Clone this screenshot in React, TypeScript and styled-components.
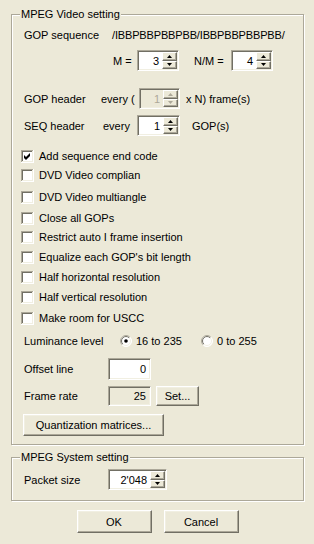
import styled, { createGlobalStyle } from "styled-components"

const GlobalStyle = createGlobalStyle`
  html, body {
    margin: 0;
    padding: 0;
    background: #ece9d8;
  }
  body {
    font-family: "Liberation Sans", Arial, sans-serif;
    font-size: 11px;
    color: #000;
  }
`

const Dialog = styled.div`
  width: 314px;
  height: 544px;
  box-sizing: border-box;
  padding: 8px 10px 0 11px;
  background: #ece9d8;
`

const Group = styled.fieldset<{ $mt?: number }>`
  margin: ${p => p.$mt ?? 0}px 0 0 0;
  padding: 0;
  min-width: 0;
  border: 1px solid #aca899;
  box-shadow: inset 1px 1px 0 #fff, 1px 1px 0 #fff;
`

const Legend = styled.legend`
  margin-left: 8px;
  padding: 0 1px;
  line-height: 13px;
  background: #ece9d8;
`

const Body = styled.div<{ $pt: number; $pb: number }>`
  padding: ${p => p.$pt}px 0 ${p => p.$pb}px 12px;
`

const Row = styled.div<{ $h: number; $mt?: number; $pl?: number }>`
  display: flex;
  align-items: center;
  height: ${p => p.$h}px;
  margin-top: ${p => p.$mt ?? 0}px;
  padding-left: ${p => p.$pl ?? 0}px;
  white-space: nowrap;
`

const Label = styled.span<{ $w?: number; $ml?: number }>`
  flex: none;
  width: ${p => (p.$w ? `${p.$w}px` : "auto")};
  margin-left: ${p => p.$ml ?? 0}px;
`

const Pattern = styled.span`
  flex: none;
  white-space: nowrap;
  letter-spacing: -0.15px;
`

const Field = styled.div<{ $w: number; $h?: number; $bg?: string }>`
  box-sizing: border-box;
  flex: none;
  display: flex;
  width: ${p => p.$w}px;
  height: ${p => p.$h ?? 21}px;
  padding: 1px;
  background: ${p => p.$bg ?? "#fff"};
  border: 1px solid;
  border-color: #aca899 #fff #fff #aca899;
  box-shadow: inset 1px 1px 0 #716f64, inset -1px -1px 0 #f1efe2;
`

const Value = styled.span<{ $dim?: boolean }>`
  flex: 1;
  display: flex;
  align-items: center;
  justify-content: flex-end;
  padding-right: 3px;
  color: ${p => (p.$dim ? "#aca899" : "#000")};
`

const Arrows = styled.div`
  display: flex;
  flex-direction: column;
  width: 15px;
`

const ArrowBtn = styled.div`
  flex: 1;
  box-sizing: border-box;
  display: flex;
  align-items: center;
  justify-content: center;
  background: #ece9d8;
  border: 1px solid;
  border-color: #fff #716f64 #716f64 #fff;
  box-shadow: inset -1px -1px 0 #aca899;
`

const Button = styled.button<{ $w: number; $h: number; $ml?: number }>`
  flex: none;
  box-sizing: border-box;
  width: ${p => p.$w}px;
  height: ${p => p.$h}px;
  margin-left: ${p => p.$ml ?? 0}px;
  padding: 0;
  background: #ece9d8;
  font-family: inherit;
  font-size: 11px;
  color: #000;
  border: 1px solid;
  border-color: #fff #716f64 #716f64 #fff;
  box-shadow: inset -1px -1px 0 #aca899, inset 1px 1px 0 #f1efe2;
`

const CheckRow = styled(Row)`
  margin-left: -3px;
  gap: 5px;
`

const Option = styled.label<{ $w?: number }>`
  display: flex;
  align-items: center;
  gap: 4px;
  width: ${p => (p.$w ? `${p.$w}px` : "auto")};
`

const Footer = styled.div`
  display: flex;
  justify-content: center;
  gap: 12px;
  margin-top: 9px;
`

function Arrow({ up, dim }: { up?: boolean; dim?: boolean }) {
  return (
    <svg width="5" height="3" viewBox="0 0 5 3">
      <path d={up ? "M0 3 L2.5 0 L5 3 Z" : "M0 0 L5 0 L2.5 3 Z"} fill={dim ? "#aca899" : "#000"} />
    </svg>
  )
}

function Spin({ w, value, dim }: { w: number; value: string; dim?: boolean }) {
  return (
    <Field $w={w} $bg={dim ? "#ece9d8" : "#fff"}>
      <Value $dim={dim}>{value}</Value>
      <Arrows>
        <ArrowBtn>
          <Arrow up dim={dim} />
        </ArrowBtn>
        <ArrowBtn>
          <Arrow dim={dim} />
        </ArrowBtn>
      </Arrows>
    </Field>
  )
}

function Check({ checked }: { checked?: boolean }) {
  return (
    <svg width="13" height="13" viewBox="0 0 13 13" style={{ flex: "none" }}>
      <rect x="0" y="0" width="13" height="13" fill="#fff" />
      <rect x="0" y="0" width="12" height="1" fill="#aca899" />
      <rect x="0" y="0" width="1" height="12" fill="#aca899" />
      <rect x="1" y="1" width="10" height="1" fill="#716f64" />
      <rect x="1" y="1" width="1" height="10" fill="#716f64" />
      <rect x="1" y="11" width="11" height="1" fill="#f1efe2" />
      <rect x="11" y="1" width="1" height="11" fill="#f1efe2" />
      {checked && <path d="M3 5 L5 7 L9 3 L9 6 L5 10 L3 8 Z" fill="#000" />}
    </svg>
  )
}

function Radio({ checked }: { checked?: boolean }) {
  return (
    <svg width="12" height="12" viewBox="0 0 12 12" style={{ flex: "none" }}>
      <defs>
        <linearGradient id="rimOuter" x1="0" y1="0" x2="1" y2="1">
          <stop offset="0.45" stopColor="#aca899" />
          <stop offset="0.55" stopColor="#fff" />
        </linearGradient>
        <linearGradient id="rimInner" x1="0" y1="0" x2="1" y2="1">
          <stop offset="0.45" stopColor="#716f64" />
          <stop offset="0.55" stopColor="#f1efe2" />
        </linearGradient>
      </defs>
      <circle cx="6" cy="6" r="5.5" fill="#fff" stroke="url(#rimOuter)" />
      <circle cx="6" cy="6" r="4.5" fill="none" stroke="url(#rimInner)" />
      {checked && <circle cx="6" cy="6" r="1.8" fill="#000" />}
    </svg>
  )
}

const options: [string, boolean, number][] = [
  ["Add sequence end code", true, 12],
  ["DVD Video complian", false, 3],
  ["DVD Video multiangle", false, 6],
  ["Close all GOPs", false, 5],
  ["Restrict auto I frame insertion", false, 3],
  ["Equalize each GOP's bit length", false, 4],
  ["Half horizontal resolution", false, 4],
  ["Half vertical resolution", false, 4],
  ["Make room for USCC", false, 5],
]

export default function App() {
  return (
    <Dialog>
      <GlobalStyle />
      <Group>
        <Legend>MPEG Video setting</Legend>
        <Body $pt={7} $pb={8}>
          <Row $h={14}>
            <Label $w={88}>GOP sequence</Label>
            <Pattern>/IBBPBBPBBPBB/IBBPBBPBBPBB/</Pattern>
          </Row>
          <Row $h={21} $mt={8} $pl={89}>
            <Label $w={24}>M =</Label>
            <Spin w={42} value="3" />
            <Label $w={37} $ml={15}>N/M =</Label>
            <Spin w={42} value="4" />
          </Row>
          <Row $h={21} $mt={17}>
            <Label $w={77}>GOP header</Label>
            <Label $w={38}>every (</Label>
            <Spin w={41} value="1" dim />
            <Label $ml={6}>x N) frame(s)</Label>
          </Row>
          <Row $h={21} $mt={6}>
            <Label $w={79}>SEQ header</Label>
            <Label $w={34}>every</Label>
            <Spin w={43} value="1" />
            <Label $ml={12}>GOP(s)</Label>
          </Row>
          {options.map(([text, checked, mt]) => (
            <CheckRow key={text} $h={16} $mt={mt}>
              <Check checked={checked} />
              <span>{text}</span>
            </CheckRow>
          ))}
          <Row $h={16} $mt={7}>
            <Label $w={96}>Luminance level</Label>
            <Option $w={81}>
              <Radio checked />
              16 to 235
            </Option>
            <Option>
              <Radio />
              0 to 255
            </Option>
          </Row>
          <Row $h={22} $mt={9}>
            <Label $w={84}>Offset line</Label>
            <Field $w={43} $h={22}>
              <Value>0</Value>
            </Field>
          </Row>
          <Row $h={20} $mt={6}>
            <Label $w={84}>Frame rate</Label>
            <Field $w={43} $h={20} $bg="#ece9d8">
              <Value>25</Value>
            </Field>
            <Button $w={43} $h={20} $ml={5}>Set...</Button>
          </Row>
          <Row $h={22} $mt={8}>
            <Button $w={141} $h={22} $ml={-1}>Quantization matrices...</Button>
          </Row>
        </Body>
      </Group>
      <Group $mt={6}>
        <Legend>MPEG System setting</Legend>
        <Body $pt={5} $pb={10}>
          <Row $h={21}>
            <Label $w={84}>Packet size</Label>
            <Spin w={59} value="2'048" />
          </Row>
        </Body>
      </Group>
      <Footer>
        <Button $w={75} $h={23}>OK</Button>
        <Button $w={75} $h={23}>Cancel</Button>
      </Footer>
    </Dialog>
  )
}
